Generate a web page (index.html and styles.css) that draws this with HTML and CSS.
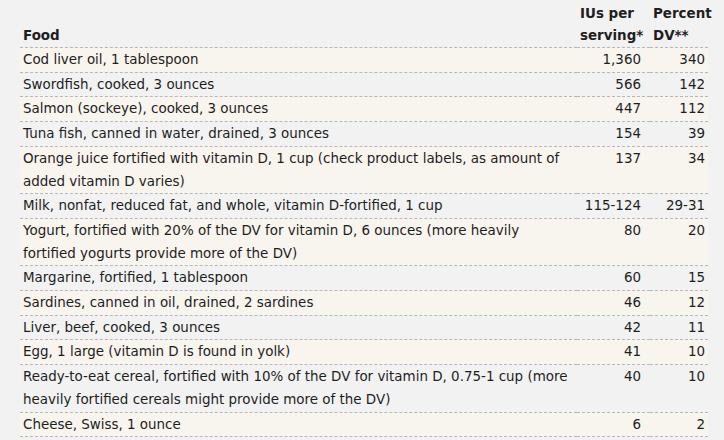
FILE: index.html
```html
<!DOCTYPE html>
<html>
<head>
<meta charset="utf-8">
<link rel="stylesheet" href="styles.css">
</head>
<body>
<div class="wrap">
<table class="dtable">
  <colgroup>
    <col class="c-food">
    <col class="c-iu">
    <col class="c-dv">
  </colgroup>
  <thead>
    <tr>
      <th class="food">Food</th>
      <th class="iu">IUs per serving*</th>
      <th class="dv">Percent DV**</th>
    </tr>
  </thead>
  <tbody>
    <tr class="odd"><td class="food">Cod liver oil, 1 tablespoon</td><td class="iu">1,360</td><td class="dv">340</td></tr>
    <tr><td class="food">Swordfish, cooked, 3 ounces</td><td class="iu">566</td><td class="dv">142</td></tr>
    <tr class="odd"><td class="food">Salmon (sockeye), cooked, 3 ounces</td><td class="iu">447</td><td class="dv">112</td></tr>
    <tr><td class="food">Tuna fish, canned in water, drained, 3 ounces</td><td class="iu">154</td><td class="dv">39</td></tr>
    <tr class="odd"><td class="food">Orange juice fortified with vitamin D, 1 cup (check product labels, as amount of added vitamin D varies)</td><td class="iu">137</td><td class="dv">34</td></tr>
    <tr><td class="food">Milk, nonfat, reduced fat, and whole, vitamin D-fortified, 1 cup</td><td class="iu">115-124</td><td class="dv">29-31</td></tr>
    <tr class="odd"><td class="food">Yogurt, fortified with 20% of the DV for vitamin D, 6 ounces (more heavily fortified yogurts provide more of the DV)</td><td class="iu">80</td><td class="dv">20</td></tr>
    <tr><td class="food">Margarine, fortified, 1 tablespoon</td><td class="iu">60</td><td class="dv">15</td></tr>
    <tr class="odd"><td class="food">Sardines, canned in oil, drained, 2 sardines</td><td class="iu">46</td><td class="dv">12</td></tr>
    <tr><td class="food">Liver, beef, cooked, 3 ounces</td><td class="iu">42</td><td class="dv">11</td></tr>
    <tr class="odd"><td class="food">Egg, 1 large (vitamin D is found in yolk)</td><td class="iu">41</td><td class="dv">10</td></tr>
    <tr><td class="food">Ready-to-eat cereal, fortified with 10% of the DV for vitamin D, 0.75-1 cup (more heavily fortified cereals might provide more of the DV)</td><td class="iu">40</td><td class="dv">10</td></tr>
    <tr class="odd"><td class="food">Cheese, Swiss, 1 ounce</td><td class="iu">6</td><td class="dv">2</td></tr>
  </tbody>
</table>
</div>
</body>
</html>
```
FILE: styles.css
```css
html, body {
  margin: 0;
  padding: 0;
  background: #f2f2f2;
}
body {
  font-family: "DejaVu Sans", Verdana, sans-serif;
  font-size: 13.45px;
  color: #1e1e1e;
}
.wrap {
  padding: 3px 0 0 20px;
}
.dtable {
  width: 688px;
  border-collapse: collapse;
  table-layout: fixed;
}
.c-food { width: 557px; }
.c-iu { width: 73px; }
.c-dv { width: 58px; }

.dtable th {
  font-weight: bold;
  text-align: left;
  vertical-align: bottom;
  line-height: 22px;
  padding: 0 3px 0 3px;
  border-bottom: 1px dashed #b8b8b8;
}
.dtable td {
  line-height: 22.7px;
  padding: 1px 3px 0 3px;
  vertical-align: top;
  border-bottom: 1px dashed #b8b8b8;
}
.dtable td.food {
  padding-right: 6px;
}
.dtable td.iu,
.dtable td.dv {
  text-align: right;
}
.dtable td.iu {
  padding-right: 9px;
}
.dtable tr.odd td {
  background: #f8f4ee;
}
```
